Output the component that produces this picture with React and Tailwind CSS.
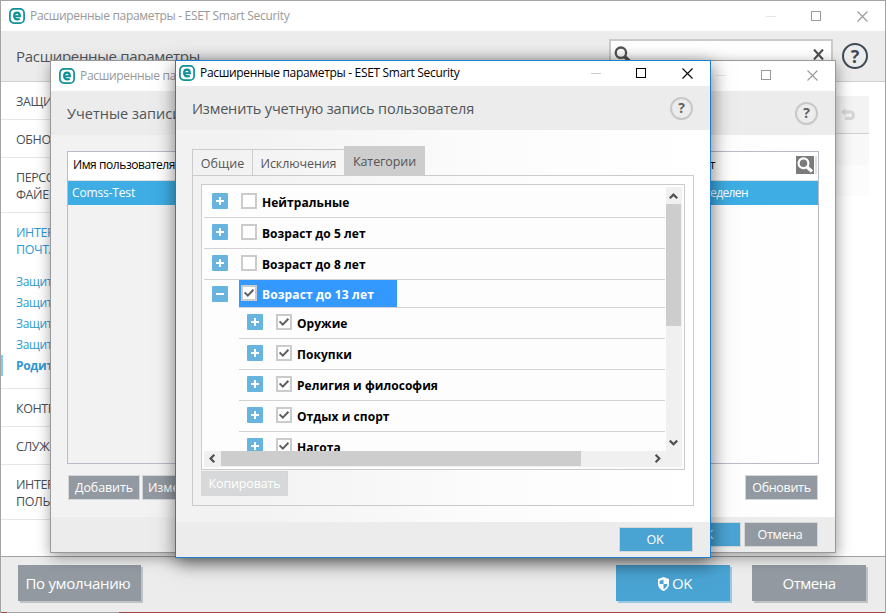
function SearchIcon({ className }) {
  return (
    <svg className={"shrink-0 " + className} viewBox="0 0 16 16" fill="none">
      <circle cx="6.5" cy="6.3" r="4.9" stroke="currentColor" strokeWidth="2.2" />
      <path d="M10 10L15 14.6" stroke="currentColor" strokeWidth="3.2" />
    </svg>
  );
}

function EsetLogo() {
  return (
    <svg className="h-4 w-4 shrink-0" viewBox="0 0 16 16" fill="none">
      <rect x="0.9" y="0.9" width="14.2" height="14.2" rx="4.2" fill="#fff" stroke="#0f8f98" strokeWidth="1.7" />
      <path d="M5.2 8.3H10.9C10.9 5.6 9.9 4.6 8.1 4.6S5.1 5.8 5.1 8 6.2 11.4 8.4 11.4C9.4 11.4 10.1 11.2 10.8 10.8" stroke="#0f8f98" strokeWidth="2.1" />
    </svg>
  );
}

function Controls({ active }) {
  const c = active ? "#000" : "#999";
  return (
    <svg className="h-[11px] w-[103px] shrink-0" viewBox="0 0 103 11" fill="none">
      <path d="M0 5.5H10" stroke={active ? "#ccc" : "#e6e6e6"} />
      <rect x="45.5" y="0.5" width="9" height="9" stroke={c} />
      <path d="M91.5 0.5L101.5 10.5M101.5 0.5L91.5 10.5" stroke={c} strokeWidth="1.1" />
    </svg>
  );
}

function TitleBar({ active, className }) {
  return (
    <div className={"flex shrink-0 items-center bg-white text-xs tracking-[-0.32px] " + className + (active ? " text-black" : " text-[#999]")}>
      <EsetLogo />
      <span className="ml-[5px] flex-1 whitespace-nowrap">Расширенные параметры - ESET Smart Security</span>
      <Controls active={active} />
    </div>
  );
}

function Help({ big }) {
  return big ? (
    <div className="flex h-[26px] w-[26px] items-center justify-center rounded-full border-2 border-[#414952] text-lg leading-none font-bold text-[#414952]">?</div>
  ) : (
    <div className="flex h-[23px] w-[23px] items-center justify-center rounded-full border-2 border-[#c8c8c8] text-sm leading-none font-bold text-[#606060]">?</div>
  );
}

function Button({ children, className }) {
  return (
    <div className={"flex h-[25px] shrink-0 items-center justify-center border border-[#d4d6d8] pt-0.5 text-[12.5px] whitespace-nowrap text-white " + className}>
      {children}
    </div>
  );
}

function NavRow({ children, className }) {
  return <div className={"flex flex-col justify-center border-b border-[#e6e6e6] pt-0.5 pl-[15px] text-[12.5px] leading-[17px] tracking-[-0.4px] whitespace-nowrap text-[#4a4f55] " + className}>{children}</div>;
}

function Expander({ open }) {
  return (
    <svg className="mt-1.5 h-4 w-4 shrink-0" viewBox="0 0 16 16">
      <rect width="16" height="16" rx="1" fill="#67b5de" />
      <path d={open ? "M4 8H12" : "M4 8H12M8 4V12"} stroke="#fff" strokeWidth="2" />
    </svg>
  );
}

function CheckBox({ checked }) {
  return (
    <svg className="h-4 w-4 shrink-0" viewBox="0 0 16 16" fill="none">
      <rect x="1" y="1" width="14" height="14" fill="#fff" stroke="#cbcbcb" strokeWidth="2" />
      {checked && <path d="M3.6 7.4L6.8 10.6L12.4 4.8" stroke="#5e5e5e" strokeWidth="2" />}
    </svg>
  );
}

function TreeRow({ label, checked, child }) {
  return (
    <div className={"flex h-[31px] shrink-0 border-b border-[#d2d2d2] " + (child ? "ml-[35px] pl-2" : "pl-2")}>
      <Expander />
      <div className="mt-1.5 ml-[13px]"><CheckBox checked={checked} /></div>
      <span className="mt-2 ml-[5px] text-xs leading-4 font-bold tracking-[0.05px] whitespace-nowrap text-black">{label}</span>
    </div>
  );
}

function MainWindow() {
  return (
    <div className="flex h-[613px] w-[886px] flex-col border border-[#a3a3a3] bg-white">
      <TitleBar className="h-[30px] pr-4 pl-2" />
      <div className="flex h-[51px] shrink-0 border-b border-[#cfcfcf] bg-[#ececec] pl-[15px]">
        <span className="mt-[13px] flex-1 text-[15px] leading-6 tracking-[-0.3px] text-[#50555a]">Расширенные параметры</span>
        <div className="mt-2 flex h-[31px] w-[224px] items-center justify-between border-2 border-[#cbcbcb] bg-white pr-[7px] pl-[3px]">
          <SearchIcon className="h-[17px] w-[17px] text-[#555]" />
          <svg className="h-[11px] w-[11px]" viewBox="0 0 11 11"><path d="M1 0.5L10 10.5M10 0.5L1 10.5" stroke="#505050" strokeWidth="2.1" /></svg>
        </div>
        <div className="mt-3 mr-[17px] ml-[9px]"><Help big /></div>
      </div>
      <div className="flex min-h-0 flex-1 justify-between overflow-hidden">
        <div className="w-[200px]">
          <NavRow className="h-[38px]">ЗАЩИТА</NavRow>
          <NavRow className="h-[38px]">ОБНОВЛЕНИЕ</NavRow>
          <NavRow className="h-[55px]"><span>ПЕРСОНАЛЬНЫЙ</span><span>ФАЙЕРВОЛ</span></NavRow>
          <div className="h-44 border-b border-[#e6e6e6] pt-[11px] text-[#2e9ad2]">
            <div className="pl-[15px] text-[12.5px] leading-[17px] tracking-[-0.4px]">ИНТЕРНЕТ И<br />ПОЧТА</div>
            <div className="mt-[13px] text-xs leading-[21px] tracking-[-0.3px]">
              <div className="pl-[15px]">Защита</div>
              <div className="pl-[15px]">Защита</div>
              <div className="pl-[15px]">Защита</div>
              <div className="pl-[15px]">Защита</div>
              <div className="border-l-2 border-[#82cbf5] pl-[13px] font-bold tracking-[-0.3px]">Родительский</div>
            </div>
          </div>
          <NavRow className="h-[38px]">КОНТРОЛЬ</NavRow>
          <NavRow className="h-[38px]">СЛУЖЕБНЫЕ</NavRow>
          <NavRow className="h-[55px]"><span>ИНТЕРФЕЙС</span><span>ПОЛЬЗОВАТЕЛЯ</span></NavRow>
        </div>
        <div className="mt-[14px] mr-4 w-[60px]">
          <div className="flex h-[38px] items-center border-b border-[#d0d0d0] bg-[#f3f3f3] pl-[32px]">
            <svg className="h-[13px] w-[14px]" viewBox="0 0 14 13" fill="none">
              <path d="M3 4H9.5C11.5 4 12.4 5.2 12.4 7.2S11.5 10.5 9.5 10.5H4" stroke="#d6d6d6" strokeWidth="3" />
              <path d="M0 4L4.5 0V8Z" fill="#d6d6d6" />
            </svg>
          </div>
          <div className="h-[31px] bg-[#f8f8f8]" />
          <div className="h-[31px] bg-[#fcfcfc]" />
        </div>
      </div>
      <div className="flex h-[56px] shrink-0 border-t border-[#a3a3a3] bg-[#ececec] pt-2 pr-[19px] pl-[17px] text-[15px] text-white">
        <div className="flex h-9 w-[123px] items-center justify-center bg-[#9299a0] pr-[3px] tracking-[-0.33px] shadow-[2px_2px_0_#bfc2c5]">По умолчанию</div>
        <div className="flex-1" />
        <div className="mr-[22px] flex h-9 w-[114px] items-center justify-center gap-[3px] bg-[#4aa4d3] pt-px pl-1 tracking-[-0.5px] shadow-[2px_2px_0_#9bc8e0]">
          <svg className="h-3.5 w-[11px]" viewBox="0 0 11 14">
            <path d="M5.5 0L11 2V7C11 10.5 8.5 12.5 5.5 14C2.5 12.5 0 10.5 0 7V2Z" fill="#fff" />
            <path d="M5.5 2.8V7H1.6V3.8ZM5.5 7H9.4C9.4 9.5 7.8 11 5.5 12.2Z" fill="#4aa4d3" />
          </svg>
          OK
        </div>
        <div className="flex h-9 w-[114px] items-center justify-center bg-[#9299a0] tracking-[-0.5px] shadow-[2px_2px_0_#bfc2c5]">Отмена</div>
      </div>
      <div className="flex h-0 justify-between">
        <div className="z-10 h-px flex-1 bg-[linear-gradient(90deg,#a3484a_6px,#a3a3a3_6px,#a3a3a3_118px,#a3484a_118px)]" />
      </div>
    </div>
  );
}

function AccountsWindow() {
  return (
    <div className="absolute top-[60px] left-[50px] flex h-[493px] w-[786px] flex-col border border-[#999] bg-[linear-gradient(90deg,#f2f2f2_20%,#fcfcfc_75%,#fff)] shadow-[1px_4px_14px_rgba(0,0,0,0.4)]">
      <TitleBar className="h-[30px] pr-4 pb-px pl-2" />
      <div className="flex h-11 shrink-0 items-center justify-between bg-[#ececec] pr-[17px] pl-4 text-[#50555a]">
        <span className="pt-0.5 text-[14.5px]">Учетные записи</span>
        <Help />
      </div>
      <div className="mt-4 ml-4 flex h-[313px] w-[752px] shrink-0 flex-col border border-[#b9b9c9]">
        <div className="flex h-[29px] items-center border-b border-[#e2e2e2] bg-white pl-[5px] text-xs tracking-[-0.42px] text-black">
          <span className="flex-1 pb-0.5">Имя пользователя</span>
          <span className="w-[87px] pb-0.5 text-right">Возраст</span>
          <div className="mr-px mb-[3px] ml-[81px] flex h-[18px] w-[21px] border-r-2 border-[#e2e2e2]">
            <div className="flex h-[18px] w-[18px] items-center justify-center bg-[#7b7b7b]"><SearchIcon className="h-4 w-4 text-white" /></div>
          </div>
        </div>
        <div className="flex h-6 items-center justify-between bg-[#3dade3] pr-[70px] pb-px pl-1 text-xs tracking-[-0.15px] text-white">
          <span>Comss-Test</span>
          <span className="tracking-[-0.6px]">Не определен</span>
        </div>
      </div>
      <div className="mt-[11px] flex flex-1 items-start pr-[17px] pl-[17px]">
        <Button className="w-[72px] bg-[#9299a0] tracking-[-0.1px]">Добавить</Button>
        <Button className="ml-0.5 w-[72px] bg-[#9299a0] tracking-[-0.1px]">Изменить</Button>
        <div className="flex-1" />
        <Button className="w-[73px] bg-[#9299a0] tracking-[-0.3px]">Обновить</Button>
      </div>
      <div className="flex h-[35px] shrink-0 items-start justify-end gap-[3px] bg-[#ececec] pt-[5px] pr-[17px]">
        <Button className="w-[73px] bg-[#4aa4d3]">OK</Button>
        <Button className="w-[74px] bg-[#9299a0] pr-0.5 tracking-[-0.3px]">Отмена</Button>
      </div>
    </div>
  );
}

function Chevron({ d, className }) {
  return (
    <svg className={"h-[9px] w-[9px] " + className} viewBox="0 0 9 9" fill="none">
      <path d={d} stroke="#505050" strokeWidth="2.2" />
    </svg>
  );
}

function CategoryTree() {
  return (
    <div className="mt-2 ml-2 flex h-[286px] w-[484px] shrink-0 flex-col border border-[#cbcbcb] bg-[#fdfdfd] p-0.5">
      <div className="flex h-[264px] shrink-0">
        <div className="flex flex-1 flex-col overflow-hidden pr-px">
          <TreeRow label="Нейтральные" />
          <TreeRow label="Возраст до 5 лет" />
          <TreeRow label="Возраст до 8 лет" />
          <div className="flex h-7 shrink-0 pl-2">
            <Expander open />
            <div className="ml-[11px] flex flex-1 border-b border-[#d2d2d2]">
              <div className="flex h-[27px] w-[158px] bg-[#3399ff] pt-[5px] pl-0.5">
                <CheckBox checked />
                <span className="mt-0.5 ml-[5px] text-xs leading-4 font-bold tracking-[0.13px] whitespace-nowrap text-white">Возраст до 13 лет</span>
              </div>
            </div>
          </div>
          <TreeRow label="Оружие" checked child />
          <TreeRow label="Покупки" checked child />
          <TreeRow label="Религия и философия" checked child />
          <TreeRow label="Отдых и спорт" checked child />
          <TreeRow label="Нагота" checked child />
        </div>
        <div className="flex w-4 flex-col items-start bg-[#f0f0f0]">
          <Chevron className="mt-[5px] ml-[3px] shrink-0" d="M0.8 6.3L4.5 2.6L8.2 6.3" />
          <div className="mt-[3px] h-[122px] w-[15px] bg-[#cdcdcd]" />
          <div className="flex-1" />
          <Chevron className="mb-1 ml-[3px] shrink-0" d="M0.8 2.6L4.5 6.3L8.2 2.6" />
        </div>
      </div>
      <div className="flex h-4 items-start bg-[#f0f0f0]">
        <Chevron className="mt-[3px] ml-1" d="M6.3 0.8L2.6 4.5L6.3 8.2" />
        <div className="ml-1 h-[15px] w-[360px] bg-[#cdcdcd]" />
        <div className="flex-1" />
        <Chevron className="mt-[3px] mr-5" d="M2.6 0.8L6.3 4.5L2.6 8.2" />
      </div>
    </div>
  );
}

function EditWindow() {
  return (
    <div className="absolute top-[60px] left-[175px] flex h-[498px] w-[536px] flex-col border border-[#1e7fd0] bg-[linear-gradient(90deg,#f2f2f2_10%,#fcfcfc_60%,#fff)] shadow-[1px_5px_18px_rgba(0,0,0,0.55)]">
      <TitleBar active className="h-[25px] pr-4 pb-px pl-[3px]" />
      <div className="flex h-11 shrink-0 items-center justify-between bg-[#ececec] pr-[17px] pl-4 text-[#50555a]">
        <span className="pt-0.5 text-[14.5px] tracking-[-0.17px]">Изменить учетную запись пользователя</span>
        <Help />
      </div>
      <div className="mt-4 ml-4 flex h-[29px] shrink-0 items-end text-[12.5px] text-[#555]">
        <div className="flex h-[26px] w-[61px] items-center justify-center border-t border-r border-l border-[#cbcbcb] pt-[3px]">Общие</div>
        <div className="flex h-[26px] w-[91px] items-center justify-center border-t border-[#cbcbcb] pt-[3px] tracking-[-0.1px]">Исключения</div>
        <div className="flex h-[29px] w-[81px] items-center justify-center bg-[#cdcdcd] pt-[3px] tracking-[-0.1px]">Категории</div>
      </div>
      <div className="ml-4 h-[331px] w-[502px] shrink-0 border border-[#cbcbcb]">
        <CategoryTree />
        <Button className="mt-px ml-2 w-[87px] bg-[#d6d8da] tracking-[-0.15px]">Копировать</Button>
      </div>
      <div className="mt-4 flex flex-1 items-start justify-end bg-[#ececec] pt-[5px] pr-[17px]">
        <Button className="w-[74px] bg-[#4aa4d3] pr-0.5 tracking-[-0.1px]">OK</Button>
      </div>
    </div>
  );
}

export default function App() {
  return (
    <div className="relative h-[613px] w-[886px] overflow-hidden font-['Open_Sans','Noto_Sans',sans-serif]">
      <MainWindow />
      <AccountsWindow />
      <EditWindow />
    </div>
  );
}
